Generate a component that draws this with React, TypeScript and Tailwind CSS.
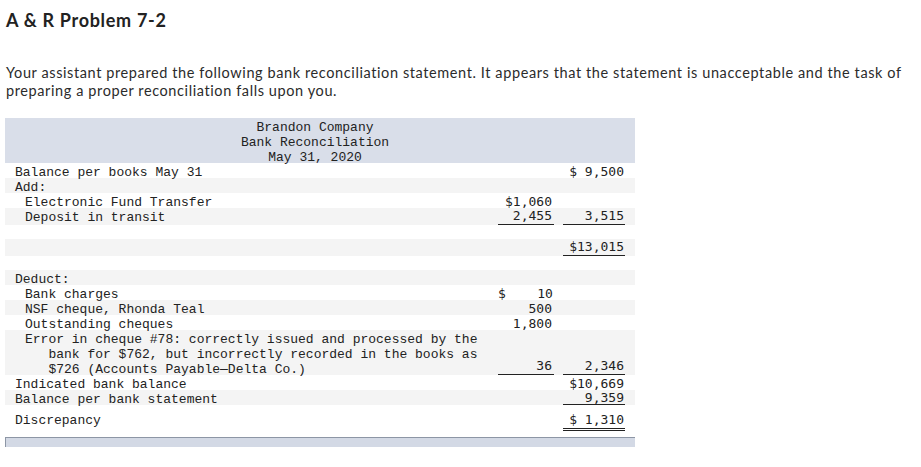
const mono = "font-['Liberation_Mono','Courier_New',monospace]";
const num = "font-['DejaVu_Sans_Mono',monospace]";

type Row = {
  label?: string[];
  indent?: number;
  c2?: string;
  c3?: string;
  u2?: boolean;
  u3?: boolean;
  tight3?: boolean;
  dbl3?: boolean;
  gray?: boolean;
  h: string;
  pt?: string;
};

const rows: Row[] = [
  { label: ["Balance per books May 31"], c3: "$ 9,500", h: "h-[15px]" },
  { label: ["Add:"], gray: true, h: "h-[15px]" },
  { label: ["Electronic Fund Transfer"], indent: 1, c2: "$1,060", h: "h-[15px]" },
  { label: ["Deposit in transit"], indent: 1, c2: "2,455", c3: "3,515", u2: true, u3: true, gray: true, h: "h-[17px]" },
  { h: "h-[14px]" },
  { c3: "$13,015", u3: true, gray: true, h: "h-[17px]" },
  { h: "h-[14px]" },
  { label: ["Deduct:"], gray: true, h: "h-[15px]" },
  { label: ["Bank charges"], indent: 1, c2: "$    10", h: "h-[15px]" },
  { label: ["NSF cheque, Rhonda Teal"], indent: 1, c2: "500", gray: true, h: "h-[15px]" },
  { label: ["Outstanding cheques"], indent: 1, c2: "1,800", h: "h-[15px]" },
  {
    label: [
      "Error in cheque #78: correctly issued and processed by the",
      "   bank for $762, but incorrectly recorded in the books as",
      "   $726 (Accounts Payable\u2014Delta Co.)",
    ],
    indent: 1,
    c2: "36",
    c3: "2,346",
    u2: true,
    u3: true,
    gray: true,
    h: "h-[45px]",
  },
  { label: ["Indicated bank balance"], c3: "$10,669", h: "h-[15px]" },
  { label: ["Balance per bank statement"], c3: "9,359", tight3: true, gray: true, h: "h-[15px]" },
  { label: ["Discrepancy"], c3: "$ 1,310", dbl3: true, h: "h-[26px]", pt: "pt-[6px]" },
];

// underline cells sit at the bottom of their row, plain ones on one 15px line
const cell = (u?: boolean, dbl?: boolean, tight?: boolean) =>
  dbl
    ? "border-b-[3px] border-double border-[#222] h-[20px] leading-[17px]"
    : tight
    ? "border-b border-[#222] h-[15px] leading-[15px]"
    : u
    ? "border-b border-[#222] h-[17px] leading-[15px]"
    : "h-[15px] leading-[17px]";

const App = () => {
  return (
    <div className="w-[921px] h-[467px] bg-white text-[#222] overflow-hidden">
      <h1 className="pl-[6px] pt-[9px] text-[18px] leading-[22px] tracking-[0.7px] font-bold font-['Lato',sans-serif] text-[#222]">
        A &amp; R Problem 7-2
      </h1>
      <p className="pl-[6px] pt-[33px] text-[14.5px] leading-[18px] tracking-[0.6px] font-['Lato',sans-serif] text-[#2b2b2b]">
        Your assistant prepared the following bank reconciliation statement. It appears that the statement is unacceptable and the task of
        <br />
        preparing a proper reconciliation falls upon you.
      </p>
      <div className={`ml-[5px] mt-[18px] w-[630px] text-[13px] leading-[15px] ${mono}`}>
        <div className="bg-[#d9dee9] h-[45px] pt-[1px] pr-[10px] flex flex-col items-center">
          <span className="h-[15px] leading-[17px]">Brandon Company</span>
          <span className="h-[15px] leading-[17px]">Bank Reconciliation</span>
          <span className="h-[15px] leading-[17px]">May 31, 2020</span>
        </div>
        {rows.map((r, i) => (
          <div key={i} className={`flex ${r.h} ${r.pt ?? ""} ${r.gray ? "bg-[#f4f4f4]" : "bg-white"}`}>
            <div className={`flex-1 flex flex-col whitespace-pre ${r.indent ? "pl-[20px]" : "pl-[10px]"}`}>
              {(r.label ?? []).map((l, j) => (
                <span key={j} className="h-[15px] leading-[19px]">{l}</span>
              ))}
            </div>
            <div className="w-[56px] flex flex-col justify-end">
              {r.c2 && (
                <span className={`${num} whitespace-pre text-right pr-[2px] ${cell(r.u2)}`}>{r.c2}</span>
              )}
            </div>
            <div className="w-[9px]" />
            <div className="w-[62px] flex flex-col justify-end">
              {r.c3 && (
                <span className={`${num} whitespace-pre text-right pr-[1px] ${cell(r.u3, r.dbl3, r.tight3)}`}>{r.c3}</span>
              )}
            </div>
            <div className="w-[10px]" />
          </div>
        ))}
        <div className="mt-[6px] h-[10px] bg-[#d3d9e5] border-t border-l border-[#8d96a5]" />
      </div>
    </div>
  );
};

export default App;
